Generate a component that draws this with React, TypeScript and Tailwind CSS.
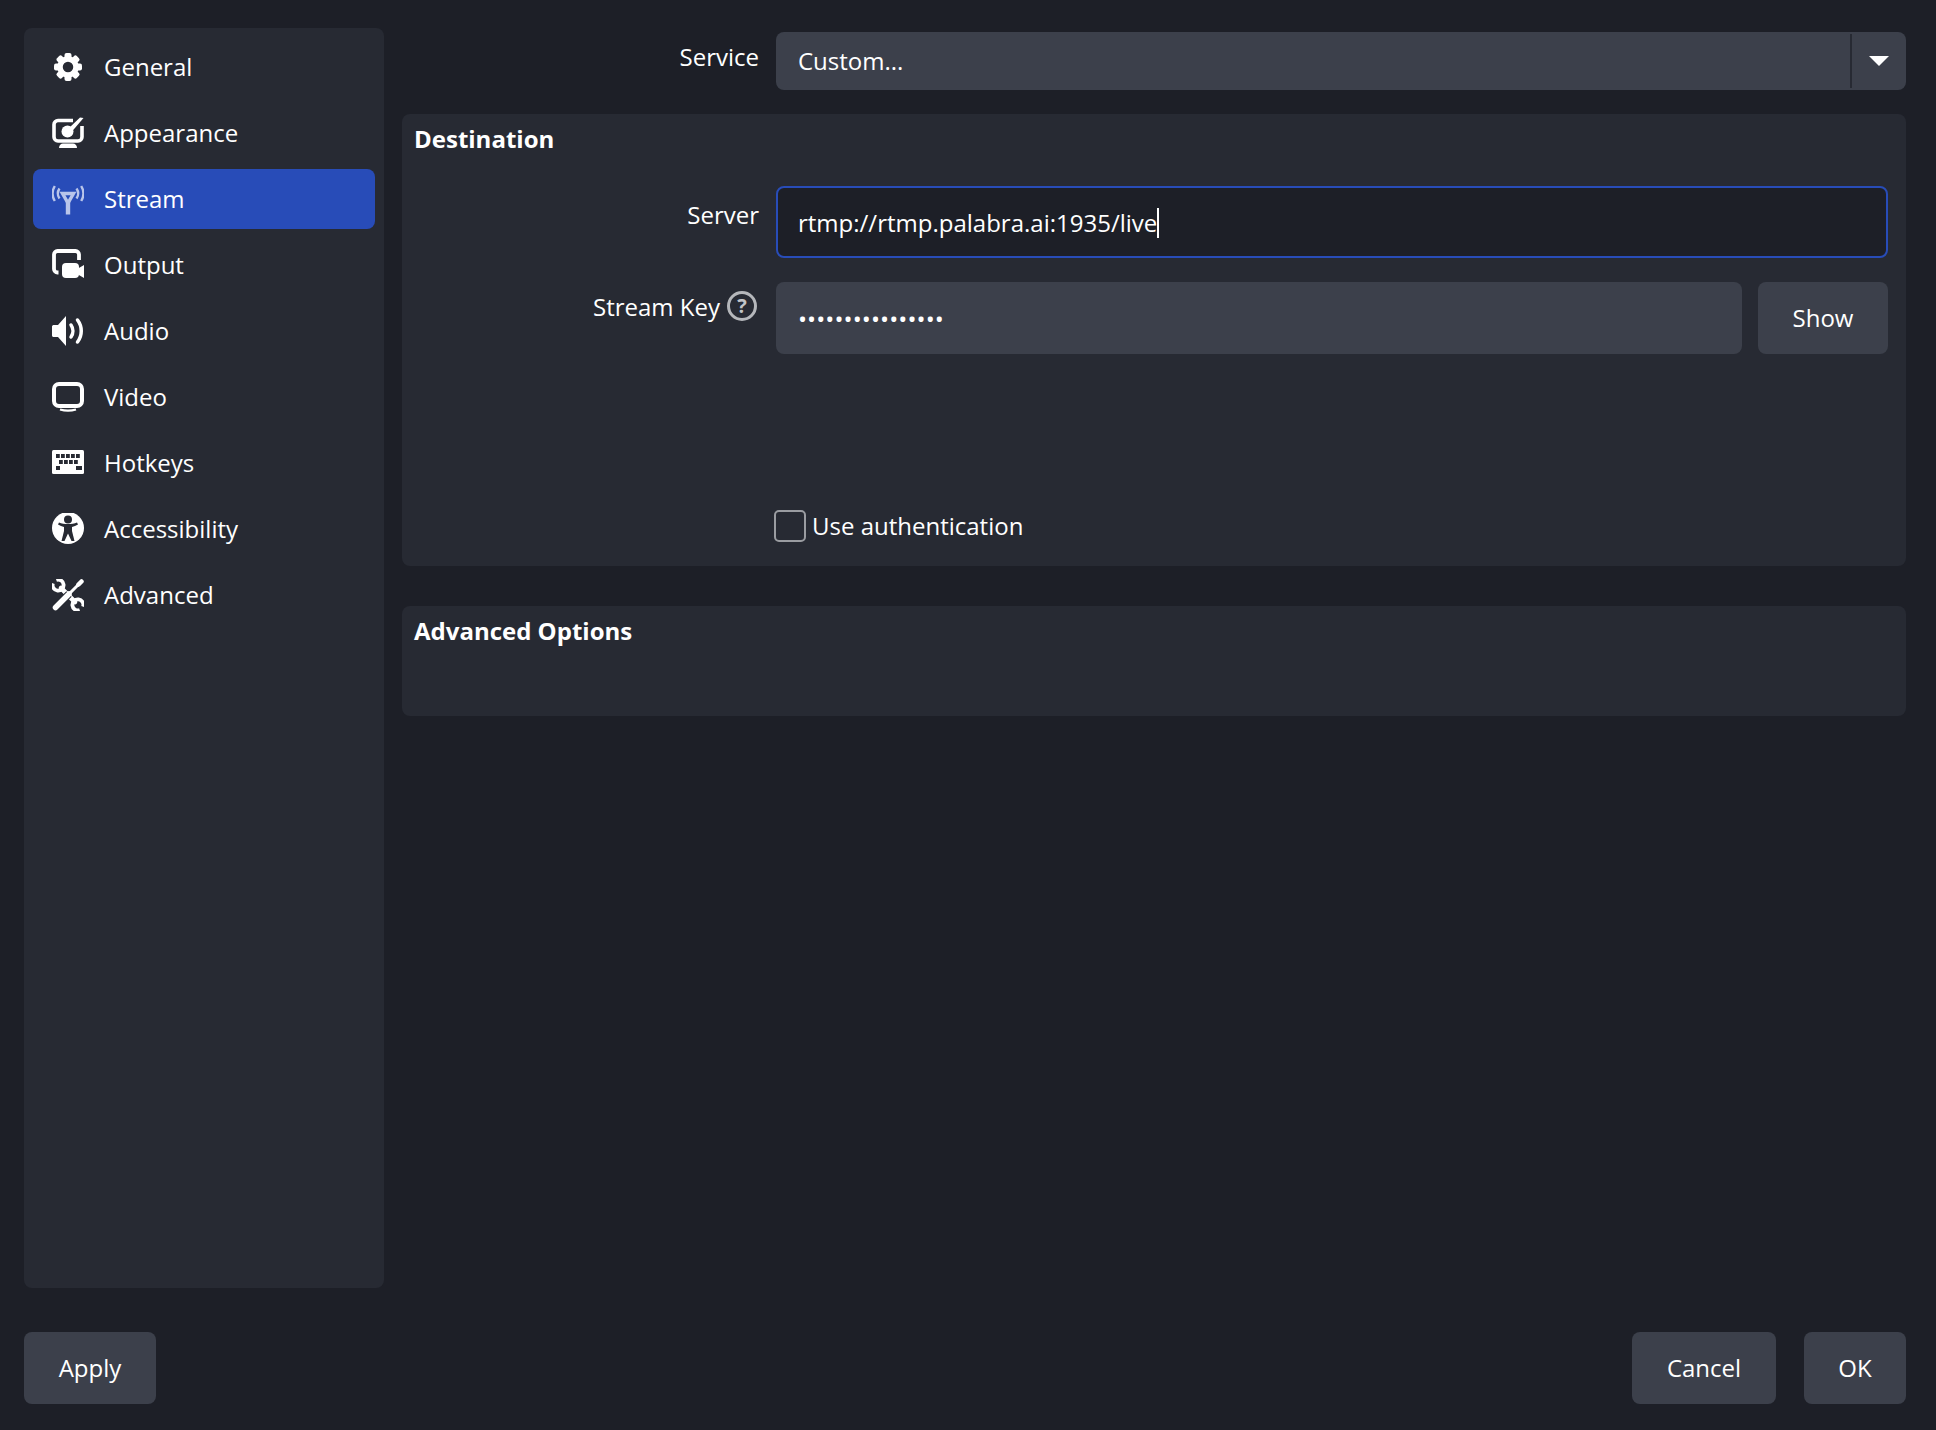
import React from "react";

const PANEL = "#272a33";

const GearIcon = () => (
  <svg viewBox="0 0 32 32" className="w-8 h-8" fill="white">
    <circle cx="16" cy="16" r="8" fill="none" stroke="white" strokeWidth="5.500" />
    {[0, 45, 90, 135, 180, 225, 270, 315].map((a) => (
      <rect key={a} x="12.500" y="2" width="7" height="7" rx="2" transform={`rotate(${a} 16 16)`} />
    ))}
  </svg>
);

const AppearanceIcon = () => (
  <svg viewBox="0 0 32 32" className="w-8 h-8" fill="white">
    <path d="M21 3.500H6a4 4 0 0 0-4 4V20a4 4 0 0 0 4 4h20a4 4 0 0 0 4-4V9" fill="none" stroke="white" strokeWidth="3.600" />
    <circle cx="15.500" cy="14.500" r="6" />
    <path d="M16 12L28 0.500L31.500 1L19.500 15z" />
    <path d="M7 31c0-3 2-4.500 4-4.500h10c2 0 4 1.500 4 4.500z" />
  </svg>
);

const StreamIcon = () => (
  <svg viewBox="0 0 32 32" className="w-8 h-8" fill="none" stroke="#b9c5ea" strokeWidth="2.400">
    <path d="M10.500 10.500h11L16 20z" strokeWidth="3.400" />
    <path d="M16 18v13.500" strokeWidth="4.400" />
    <path d="M7.500 5.500c-2.200 3.200-2.200 6.800 0 10M24.500 5.500c2.200 3.200 2.200 6.800 0 10" />
    <path d="M2.800 3c-3 5-3 10 0 15M29.200 3c3 5 3 10 0 15" />
  </svg>
);

const OutputIcon = () => (
  <svg viewBox="0 0 32 32" className="w-8 h-8" fill="white">
    <path d="M6.500 23.500H5.500a3.500 3.500 0 0 1-3.500-3.500V5.500A3.500 3.500 0 0 1 5.500 2h18A3.500 3.500 0 0 1 27 5.500V11" fill="none" stroke="white" strokeWidth="3.800" />
    <rect x="10" y="14" width="17" height="15" rx="4" />
    <path d="M26 19.500L32 16V29L26 25.500z" />
  </svg>
);

const AudioIcon = () => (
  <svg viewBox="0 0 32 32" className="w-8 h-8" fill="white">
    <path d="M0 11.500C0 10.500 1 10 2 10H6L14 1V31L6 22H2C1 22 0 21.500 0 20.500z" />
    <path d="M19 10c2.500 3.500 2.500 8.500 0 12" fill="none" stroke="white" strokeWidth="3.500" strokeLinecap="round" />
    <path d="M25.500 5c5 6.500 5 15.500 0 22" fill="none" stroke="white" strokeWidth="3.500" strokeLinecap="round" />
  </svg>
);

const VideoIcon = () => (
  <svg viewBox="0 0 32 32" className="w-8 h-8" fill="none" stroke="white">
    <rect x="2" y="3" width="28" height="22" rx="5" strokeWidth="4" />
    <path d="M8 28.500c5 1.500 11 1.500 16 0" strokeWidth="2.200" />
  </svg>
);

const HotkeysIcon = () => (
  <svg viewBox="0 0 32 32" className="w-8 h-8">
    <rect x="0" y="3" width="32" height="24" rx="1.500" fill="white" />
    <g fill={PANEL}>
      {[4, 9, 14, 19, 24].map((x) => (
        <rect key={x} x={x} y="7" width="3.800" height="4" />
      ))}
      {[7, 12, 17, 22].map((x) => (
        <rect key={x} x={x} y="13" width="3.800" height="4" />
      ))}
      <rect x="4" y="19" width="4" height="4" />
      <rect x="24" y="19" width="6" height="4" />
    </g>
  </svg>
);

const AccessibilityIcon = () => (
  <svg viewBox="0 0 32 32" className="w-8 h-8">
    <circle cx="16" cy="15" r="16" fill="white" />
    <g fill={PANEL}>
      <circle cx="16" cy="6.500" r="4" />
      <path d="M6 11.500L7 9.500C12 11.500 20 11.500 25 9.500L26 11.500C24 12.800 22 13.500 20 14V18L22.500 28H19.500L16 20.500L12.500 28H9.500L12 18V14C10 13.500 8 12.800 6 11.500z" />
    </g>
  </svg>
);

const AdvancedIcon = () => (
  <svg viewBox="0 0 32 32" className="w-8 h-8" fill="none" strokeLinecap="round">
    <path d="M4.300 0.900A5.500 5.500 0 1 1 0.900 4.300" stroke="white" strokeWidth="3.800" strokeLinecap="butt" />
    <path d="M27.700 31.100A5.500 5.500 0 1 1 31.100 27.700" stroke="white" strokeWidth="3.800" strokeLinecap="butt" />
    <path d="M9 9L23 23" stroke="white" strokeWidth="4.600" />
    <path d="M17 15L3.500 28.500" stroke={PANEL} strokeWidth="7.500" strokeLinecap="butt" />
    <path d="M17 15L3.500 28.500" stroke="white" strokeWidth="5.500" />
    <path d="M17 15L27 5" stroke="white" strokeWidth="3" />
    <path d="M26.500 5.500L29.500 2.500" stroke="white" strokeWidth="4.500" />
  </svg>
);

const navItems = [
  { name: "General", icon: <GearIcon /> },
  { name: "Appearance", icon: <AppearanceIcon /> },
  { name: "Stream", icon: <StreamIcon />, active: true },
  { name: "Output", icon: <OutputIcon /> },
  { name: "Audio", icon: <AudioIcon /> },
  { name: "Video", icon: <VideoIcon /> },
  { name: "Hotkeys", icon: <HotkeysIcon /> },
  { name: "Accessibility", icon: <AccessibilityIcon /> },
  { name: "Advanced", icon: <AdvancedIcon /> },
];

const Button = ({ label, width }: { label: string; width: string }) => (
  <button className={`h-[72px] ${width} shrink-0 rounded-lg bg-[#3c404b] text-white`}>{label}</button>
);

export default function App() {
  return (
    <div
      className="w-[1936px] h-[1430px] bg-[#1d1f27] text-white text-[24px] pt-[28px] pl-[24px] pr-[30px] flex flex-col overflow-hidden"
      style={{ fontFamily: '"Open Sans", sans-serif' }}
    >
      <div className="flex h-[1260px] gap-[18px]">
        {/* Sidebar */}
        <div className="w-[360px] shrink-0 rounded-lg bg-[#272a33] pt-[9px] px-[9px] flex flex-col gap-[6px]">
          {navItems.map((item) => (
            <div
              key={item.name}
              className={`h-[60px] pl-[19px] flex items-center gap-[20px] rounded-lg ${item.active ? "bg-[#284cb8]" : ""}`}
            >
              {item.icon}
              <span className="mb-[1px]">{item.name}</span>
            </div>
          ))}
        </div>

        {/* Settings */}
        <div className="flex-1 pt-[4px] flex flex-col">
          <div className="flex">
            <div className="w-[357px] pt-[7px] text-right leading-[36px]">Service</div>
            <div className="ml-[17px] flex-1 h-[58px] rounded-lg bg-[#3c404b] py-[2px] flex">
              <div className="flex-1 pl-[22px] flex items-center">Custom...</div>
              <div className="w-[56px] border-l-2 border-[#272a33] flex items-center justify-center">
                <div className="w-0 h-0 border-l-[10px] border-r-[10px] border-t-[10px] border-l-transparent border-r-transparent border-t-white" />
              </div>
            </div>
          </div>

          <div className="mt-[24px] h-[452px] rounded-lg bg-[#272a33] pt-[8px] pr-[18px] flex flex-col">
            <div className="pl-[12px] font-bold leading-[34px]">Destination</div>

            <div className="mt-[30px] flex">
              <div className="w-[357px] pt-[11px] text-right leading-[36px]">Server</div>
              <div className="ml-[17px] flex-1 h-[72px] rounded-lg border-2 border-[#284cb8] bg-[#1d1f27] pl-[20px] pt-[2px] flex items-center">
                <span>rtmp://rtmp.palabra.ai:1935/live</span>
                <span className="w-[2px] h-[30px] bg-white" />
              </div>
            </div>

            <div className="mt-[24px] flex">
              <div className="w-[357px] pt-[7px] flex justify-end items-start gap-[7px]">
                <span className="leading-[36px]">Stream Key</span>
                <span className="mt-[2px] mr-[2px] w-[30px] h-[30px] rounded-full border-[3px] border-[#b5b7bb] text-[#c2c4c8] text-[20px] font-bold leading-[24px] text-center">
                  ?
                </span>
              </div>
              <div className="ml-[17px] flex-1 flex gap-[16px]">
                <div className="flex-1 h-[72px] rounded-lg bg-[#3c404b] pl-[22px] pt-[2px] flex items-center">
                  <span className="tracking-[0.1px]">••••••••••••••••</span>
                </div>
                <Button label="Show" width="w-[130px]" />
              </div>
            </div>

            <div className="mt-[156px] ml-[372px] flex items-center gap-[6px]">
              <span className="w-[32px] h-[32px] rounded-[5px] border-2 border-[#9a9ca1]" />
              <span className="leading-[32px]">Use authentication</span>
            </div>
          </div>

          <div className="mt-[40px] h-[110px] rounded-lg bg-[#272a33] pt-[8px] pl-[12px]">
            <div className="font-bold leading-[34px]">Advanced Options</div>
          </div>
        </div>
      </div>

      {/* Footer */}
      <div className="mt-[44px] flex items-center">
        <Button label="Apply" width="w-[132px]" />
        <div className="ml-auto flex gap-[28px]">
          <Button label="Cancel" width="w-[144px]" />
          <Button label="OK" width="w-[102px]" />
        </div>
      </div>
    </div>
  );
}
